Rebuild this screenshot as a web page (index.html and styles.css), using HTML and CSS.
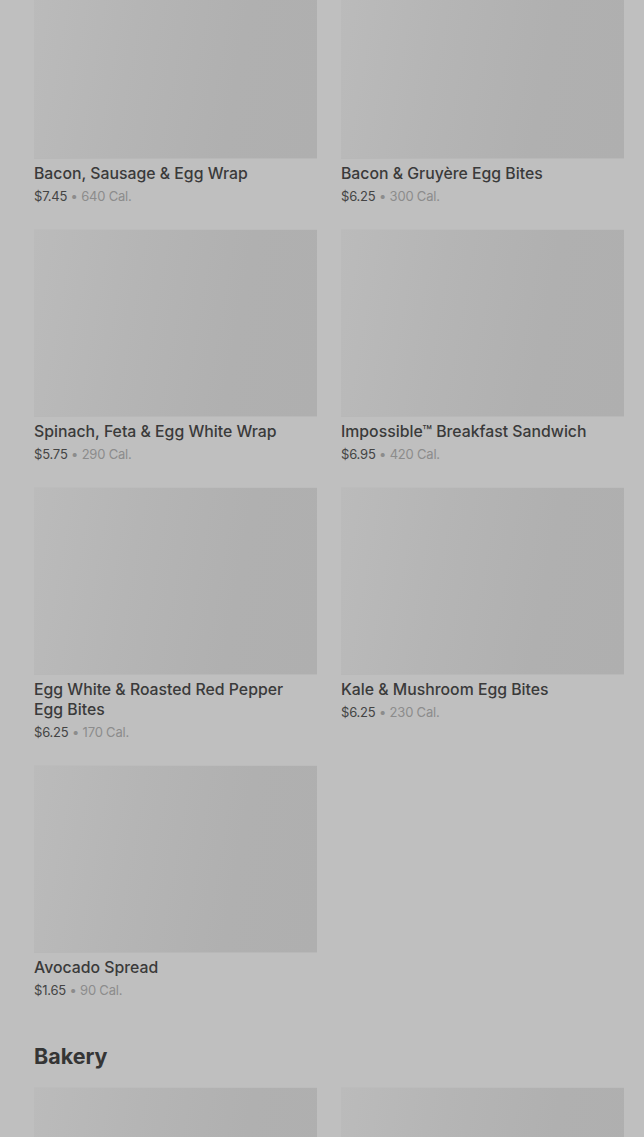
FILE: index.html
```html
<!DOCTYPE html>
<html lang="en">
<head>
<meta charset="utf-8">
<title>Menu</title>
<link rel="stylesheet" href="styles.css">
</head>
<body>
<main class="page">
  <section class="section">
    <div class="grid">
      <article class="item"><div class="thumb"></div><h3 class="name">Bacon, Sausage &amp; Egg Wrap</h3><p class="meta"><span class="price">$7.45</span> <span class="cal">• 640 Cal.</span></p></article>
      <article class="item"><div class="thumb"></div><h3 class="name">Bacon &amp; Gruyère Egg Bites</h3><p class="meta"><span class="price">$6.25</span> <span class="cal">• 300 Cal.</span></p></article>
      <article class="item"><div class="thumb"></div><h3 class="name">Spinach, Feta &amp; Egg White Wrap</h3><p class="meta"><span class="price">$5.75</span> <span class="cal">• 290 Cal.</span></p></article>
      <article class="item"><div class="thumb"></div><h3 class="name">Impossible™ Breakfast Sandwich</h3><p class="meta"><span class="price">$6.95</span> <span class="cal">• 420 Cal.</span></p></article>
      <article class="item"><div class="thumb"></div><h3 class="name">Egg White &amp; Roasted Red Pepper Egg Bites</h3><p class="meta"><span class="price">$6.25</span> <span class="cal">• 170 Cal.</span></p></article>
      <article class="item"><div class="thumb"></div><h3 class="name">Kale &amp; Mushroom Egg Bites</h3><p class="meta"><span class="price">$6.25</span> <span class="cal">• 230 Cal.</span></p></article>
      <article class="item"><div class="thumb"></div><h3 class="name">Avocado Spread</h3><p class="meta"><span class="price">$1.65</span> <span class="cal">• 90 Cal.</span></p></article>
    </div>
  </section>
  <section class="section">
    <h2 class="heading">Bakery</h2>
    <div class="grid">
      <article class="item"><div class="thumb"></div></article>
      <article class="item"><div class="thumb"></div></article>
    </div>
  </section>
</main>
</body>
</html>
```
FILE: styles.css
```css
html, body {
  margin: 0;
  padding: 0;
  background: #bfbfbf;
  overflow: hidden;
}
body {
  font-family: Inter, "Noto Sans", sans-serif;
  color: #3a3a3a;
}
.page {
  padding: 0 20px 0 34px;
  margin-top: -29px;
}
.section {
  margin-bottom: 16px;
}
.grid {
  display: grid;
  grid-template-columns: 1fr 1fr;
  column-gap: 24px;
  row-gap: 23px;
}
.item {
  display: flex;
  flex-direction: column;
}
.thumb {
  height: 188px;
  flex: none;
  background: linear-gradient(100deg, #bbbbbb 0%, #b5b5b5 35%, #b0b0b0 70%, #afafaf 100%);
  border-top: 1px solid #bcbcbc;
  border-bottom: 1px solid #b8b8b8;
  box-sizing: border-box;
}
.name {
  margin: 5px 0 0;
  padding-right: 12px;
  font-size: 15.8px;
  line-height: 20px;
  font-weight: 500;
  color: #3a3a3a;
}
.meta {
  margin: 2px 0 0;
  font-size: 13px;
  line-height: 20px;
  height: 20px;
  overflow: hidden;
  white-space: nowrap;
  letter-spacing: -0.2px;
}
.price {
  color: #444444;
}
.cal {
  color: #8c8c8c;
}
.heading {
  margin: 40px 0 15px;
  font-size: 21.5px;
  line-height: 32px;
  font-weight: 700;
  color: #353535;
}
```
